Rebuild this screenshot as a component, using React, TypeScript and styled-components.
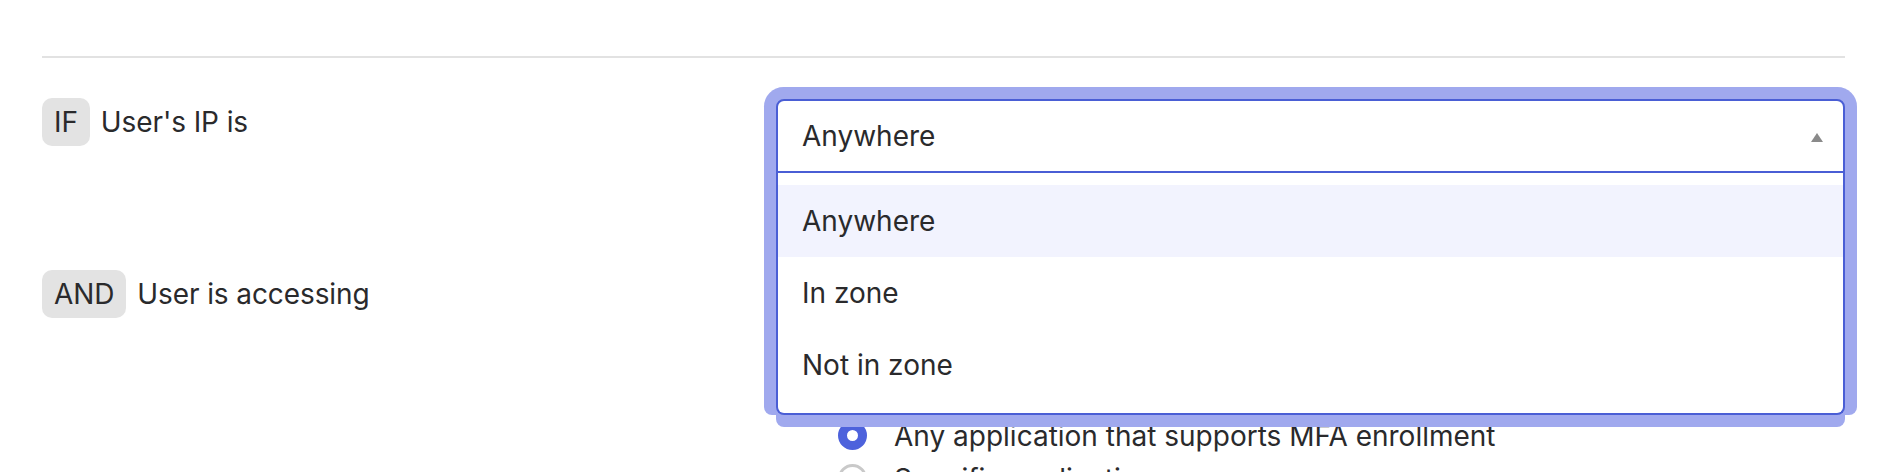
import React from "react";
import styled, { createGlobalStyle } from "styled-components";

const GlobalStyle = createGlobalStyle`
  html, body {
    margin: 0;
    padding: 0;
    background: #ffffff;
  }
  body {
    font-family: Inter, "Noto Sans", "Liberation Sans", sans-serif;
    color: #2a2a2c;
    -webkit-font-smoothing: antialiased;
  }
  * { box-sizing: border-box; }
`;

const RING = "#a0a9ee";
const FOCUS = "#4a5ed5";

const Page = styled.div`
  padding: 56px 35px 0 42px;
  height: 472px;
  overflow: hidden;
`;

const Divider = styled.hr`
  margin: 0;
  border: 0;
  height: 2px;
  background: #e2e2e2;
`;

const Rule = styled.div<{ $top: number }>`
  display: grid;
  grid-template-columns: 734px 1fr;
  margin-top: ${(p) => p.$top}px;
`;

const Condition = styled.div`
  display: flex;
  align-items: center;
  gap: 11px;
  height: 48px;
  font-size: 28px;
  line-height: 1;
  letter-spacing: -0.1px;
`;

const Badge = styled.span`
  display: inline-flex;
  align-items: center;
  height: 48px;
  padding: 0 12px;
  border-radius: 10px;
  background: #e3e3e3;
  font-size: 28px;
  color: #2a2a2c;
`;

const Dropdown = styled.div`
  position: relative;
  margin-top: 1px;
`;

const Trigger = styled.div`
  position: relative;
  z-index: 2;
  display: flex;
  align-items: center;
  justify-content: space-between;
  height: 74px;
  padding: 0 20px 0 24px;
  border: 2px solid ${FOCUS};
  border-radius: 8px 8px 0 0;
  background: #ffffff;
  box-shadow: 0 0 0 12px ${RING};
  font-size: 28px;
`;

const Caret = styled.span`
  width: 0;
  height: 0;
  border-left: 6px solid transparent;
  border-right: 6px solid transparent;
  border-bottom: 9px solid #8a8a8a;
  margin-top: 2px;
`;

const Menu = styled.ul`
  position: absolute;
  z-index: 3;
  top: 100%;
  left: 0;
  right: 0;
  margin: 0;
  padding: 12px 0;
  list-style: none;
  background: #ffffff;
  border: 2px solid ${FOCUS};
  border-top: 0;
  border-radius: 0 0 8px 8px;
  box-shadow: -12px 0 0 0 ${RING}, 12px 0 0 0 ${RING}, 0 12px 0 0 ${RING};
`;

const Option = styled.li<{ $active?: boolean }>`
  display: flex;
  align-items: center;
  height: 72px;
  padding: 0 24px;
  font-size: 28px;
  background: ${(p) => (p.$active ? "#f2f3fe" : "transparent")};
`;

const RadioGroup = styled.div`
  display: flex;
  flex-direction: column;
  padding: 144px 0 0 62px;
`;

const RadioRow = styled.label`
  display: flex;
  align-items: center;
  gap: 27px;
  height: 43px;
  font-size: 28px;
`;

const RadioDot = styled.span<{ $checked?: boolean }>`
  flex: none;
  width: 29px;
  height: 29px;
  border-radius: 50%;
  background: #ffffff;
  border: ${(p) => (p.$checked ? `9px solid #4d62dc` : `3px solid #c9c9c9`)};
`;

const options = ["Anywhere", "In zone", "Not in zone"];

export default function App() {
  return (
    <>
      <GlobalStyle />
      <Page>
        <Divider />
        <Rule $top={40}>
          <Condition>
            <Badge>IF</Badge>
            <span>User's IP is</span>
          </Condition>
          <Dropdown>
            <Trigger>
              <span>Anywhere</span>
              <Caret />
            </Trigger>
            <Menu>
              {options.map((o, i) => (
                <Option key={o} $active={i === 0}>
                  {o}
                </Option>
              ))}
            </Menu>
          </Dropdown>
        </Rule>
        <Rule $top={97}>
          <Condition>
            <Badge>AND</Badge>
            <span>User is accessing</span>
          </Condition>
          <RadioGroup>
            <RadioRow>
              <RadioDot $checked />
              <span>Any application that supports MFA enrollment</span>
            </RadioRow>
            <RadioRow>
              <RadioDot />
              <span>Specific applications</span>
            </RadioRow>
          </RadioGroup>
        </Rule>
      </Page>
    </>
  );
}
